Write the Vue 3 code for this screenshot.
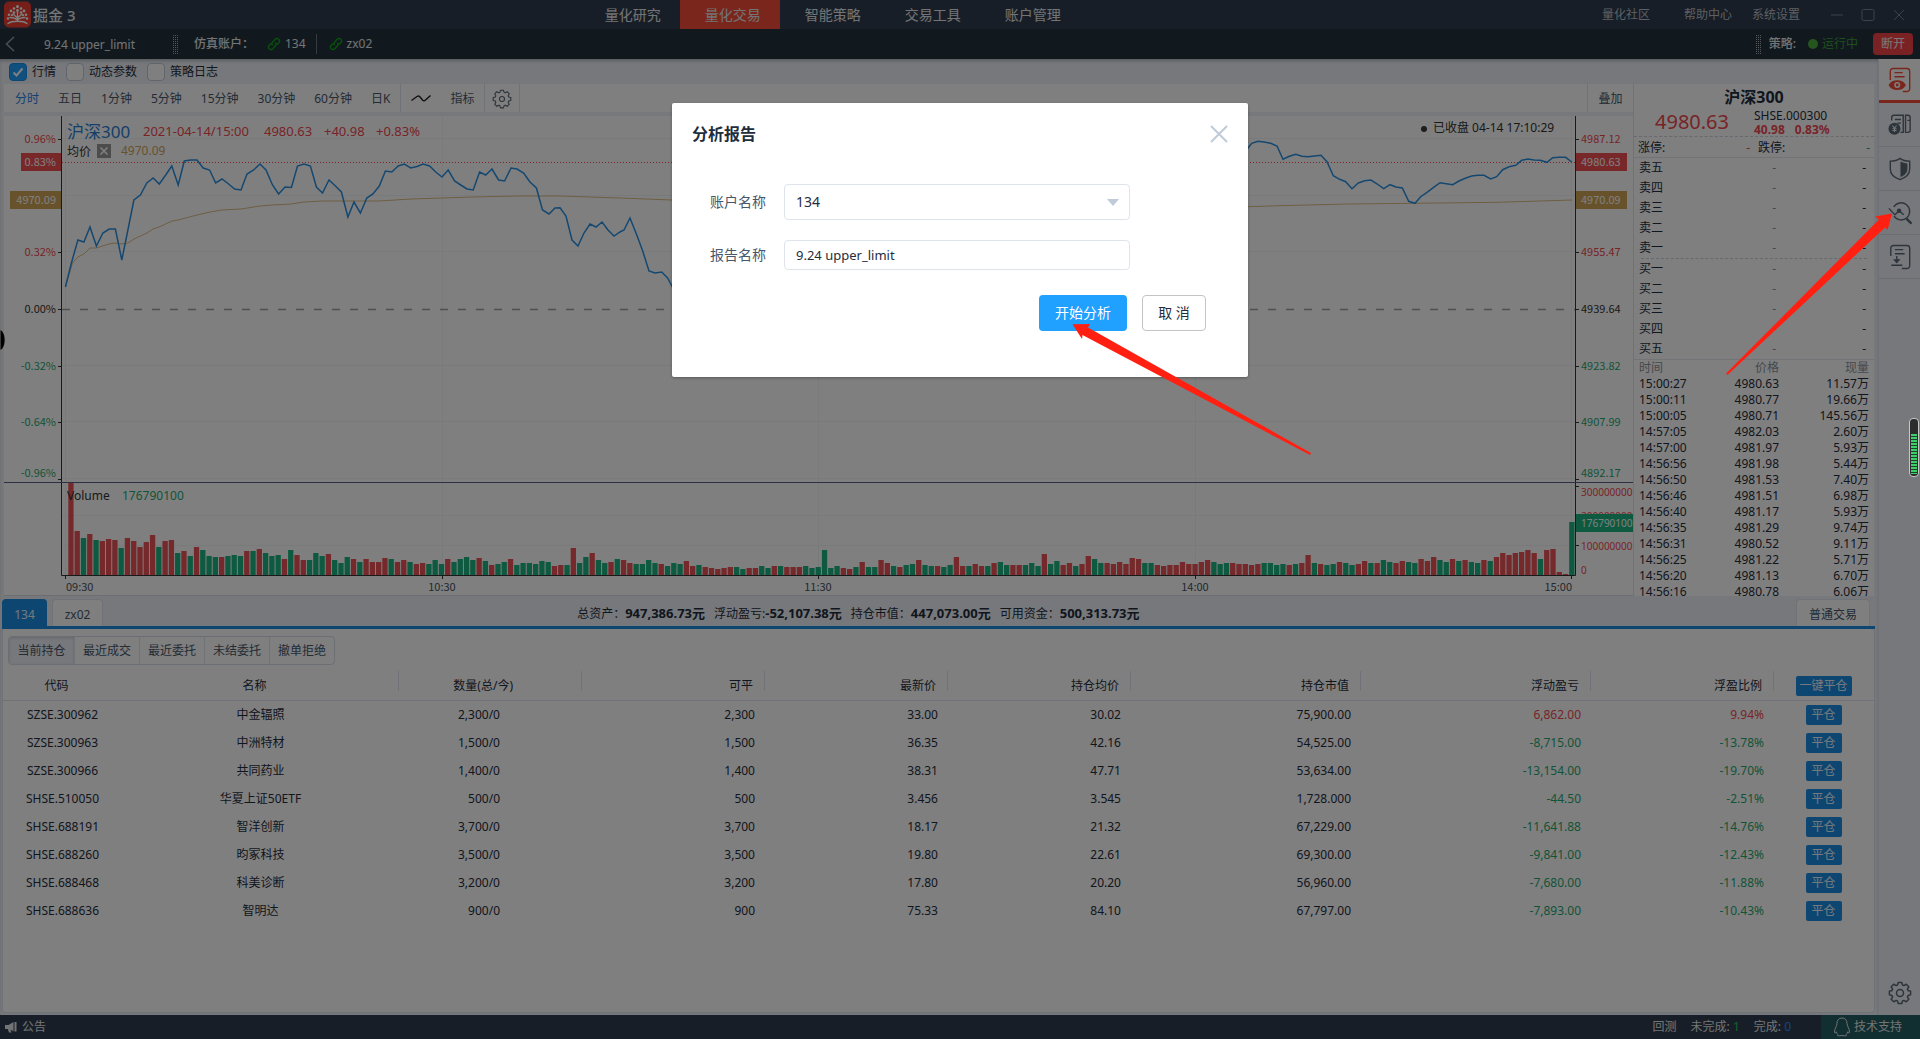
<script setup>
import { ref } from 'vue'

const tabs = ['量化研究', '量化交易', '智能策略', '交易工具', '账户管理']
const activeTab = ref('量化交易')
const panels = ref([
  { id: 'quote', label: '行情', on: true },
  { id: 'params', label: '动态参数', on: false },
  { id: 'logs', label: '策略日志', on: false },
])
const periods = ['分时', '五日', '1分钟', '5分钟', '15分钟', '30分钟', '60分钟', '日K']

const account = ref('134')
const reportName = ref('9.24 upper_limit')

const priceLine =
  '65.4,287 71.4,263 77.9,240 83.9,242 90,227 96.4,246 102.9,233 109.3,229 115.4,229 121.8,260 127.9,230 133.9,200 140.4,195 146.8,183 153.2,178 159.3,184 165.7,175 171.8,166 178.2,185 184.3,161 190.7,160 197,160 203.2,168 209.6,170 215.7,183 222,179 228.6,184 234.6,189 241,190 247,174 253.6,170 260,164 266,170 272.5,185 278.6,194 285,187 291.4,187.5 297.5,166 304,164 310.4,166 316.4,187 322.5,193 329,180 335.4,186 341.4,192 347.9,217 354,202 360.4,213 366.8,198 372.9,194 379.3,186 385.4,171 391.8,172 398.2,166 404.3,164 410.7,168 417,166.5 423.2,164 429.6,166 435.7,172 442,177 448.2,170 454.6,181 460.7,185 467,189 473.2,190 479.6,172 485.7,175 492,169 498.6,180 504.6,181 511,168 517,169 523.6,173 530,182 536.4,188 542.5,210 549,214 555,208 560,207.7 566,216 572,240 578,246 584,233 590,224 596,227 602,222 608,230 614,236 620,232 624,230 630,218 636.4,234 642.7,251 649,271 655,273 661.7,272 667.6,278 674,290 680,300 1240,160 1248,148 1251.7,143.3 1258,141.3 1264,142 1270.7,143.3 1277,146 1283,159.3 1289.3,156.3 1295.7,154.3 1302,156.3 1308,156.7 1314.3,156 1321,155.3 1327,161.7 1333.3,175.7 1339.7,179.3 1345.7,181.7 1352,188.7 1358.3,183 1364.7,180.7 1371,180 1377.3,184 1383.7,188.7 1390,184.7 1396,187 1402.3,188 1408.7,201.3 1415,203.3 1420.7,196.7 1427,192.3 1433.3,187.7 1440,182.7 1446.3,183.7 1452.7,184.7 1459,181 1465.3,178.3 1471.7,176 1478,175.3 1484,175.3 1490.7,179 1496.7,176.7 1502.7,169.7 1509,166.7 1515.7,165.3 1521.7,160.3 1528,159 1534,160 1540.3,160.3 1547,162.3 1552.7,157.7 1559.3,157.3 1565.7,157.3 1571.7,162'
const averageLine =
  '65.4,287 72.5,263 77.9,257 84,254 90,248 96,248 109,244 115,243 122,244 128,243 134,239 147,233 153,229 159,227 172,221 178,220 197,215 210,212 222,210 241,209 260,206 272,205 291,204 304,202 322,201 341,201 367,201 379,201 411,199 442,198 473,197 517,196 560,196 620,198 672,200 960,208 1248,206.7 1280,205.7 1347,204 1413,203.3 1497,202.3 1572,200'

const volumes = `
R93 R44 G37 R41 G35 R34 R36 R35 G27 R37 R34 R28 R33 R40 G28 R34 R35 G22 R24 G19 R28 G25 G19 G18 R18 G19 G20 G19 R24 G24
R26 G22 G19 G20 R16 G25 R20 R15 G15 G22 G19 R21 G15 G12 G18 R16 G13 R16 R13 R13 R17 G16 R13 R15 G13 R11 R12 G11 G15 G11
R16 G13 G16 G18 G15 R17 G14 R10 G11 G13 R16 G10 G12 G12 G11 G14 G13 R9 R10 G10 R27 G12 G18 R22 G15 G12 R13 G16 R15 R12
G11 G11 G15 G12 R11 G9 G12 G11 R14 R9 G10 R8 R7 R6 R7 R8 G8 G6 R7 R7 G9 G7 R9 G9 R8 R8 R8 G9 G7 G8 G25 G7 G9 R7 R6 G8
R13 G8 G8 R15 R12 G9 R8 G10 G11 R15 G10 G9 R9 G8 G10 R18 R9 G9 R11 R9 G9 R12 G13 G10 R10 R10 G10 G12 G9 R21 G11 G14 R10
R12 G9 R11 R19 G16 G12 R12 R11 R13 R11 R17 R16 G12 G12 R10 R9 R10 R10 R13 R11 R11 R13 R15 G13 G11 G12 R12 R11 R11 R10 R11
G12 G12 G10 G11 R10 G11 R12 R20 G12 R11 G10 G11 R13 G12 G10 R11 R14 G12 R12 G15 G13 R12 R14 G13 G12 R16 R14 R18 G15 G13
R16 G14 R15 G13 G12 R15 G14 R18 R22 R20 R22 R23 R25 R22 G16 R25 R26 R3 R1 G53`
  .trim()
  .split(/\s+/)
  .map((v, i, all) => ({ x: 1569.2 - (all.length - 1 - i) * 6.28, h: Number(v.slice(1)), up: v[0] === 'R' }))

const leftTicks = [
  { y: 139, t: '0.96%', c: 'up' },
  { y: 252, t: '0.32%', c: 'up' },
  { y: 309, t: '0.00%', c: 'flat' },
  { y: 366, t: '-0.32%', c: 'down' },
  { y: 422, t: '-0.64%', c: 'down' },
  { y: 473, t: '-0.96%', c: 'down' },
]
const rightTicks = [
  { y: 139, t: '4987.12', c: 'up' },
  { y: 252, t: '4955.47', c: 'up' },
  { y: 309, t: '4939.64', c: 'flat' },
  { y: 366, t: '4923.82', c: 'down' },
  { y: 422, t: '4907.99', c: 'down' },
  { y: 473, t: '4892.17', c: 'down' },
]
const tickMarks = [139, 162, 200, 252, 309, 366, 422, 479]
const gridRows = [139, 196, 252, 366, 422, 479, 516, 546]
const gridCols = [65, 442, 818, 1195, 1571]
const timeTicks = [
  { x: 66, t: '09:30', a: 'start' },
  { x: 442, t: '10:30', a: 'middle' },
  { x: 818, t: '11:30', a: 'middle' },
  { x: 1195, t: '14:00', a: 'middle' },
  { x: 1572, t: '15:00', a: 'end' },
]

const asks = ['卖五', '卖四', '卖三', '卖二', '卖一']
const bids = ['买一', '买二', '买三', '买四', '买五']
const tape = [
  ['15:00:27', '4980.63', '11.57万'],
  ['15:00:11', '4980.77', '19.66万'],
  ['15:00:05', '4980.71', '145.56万'],
  ['14:57:05', '4982.03', '2.60万'],
  ['14:57:00', '4981.97', '5.93万'],
  ['14:56:56', '4981.98', '5.44万'],
  ['14:56:50', '4981.53', '7.40万'],
  ['14:56:46', '4981.51', '6.98万'],
  ['14:56:40', '4981.17', '5.93万'],
  ['14:56:35', '4981.29', '9.74万'],
  ['14:56:31', '4980.52', '9.11万'],
  ['14:56:25', '4981.22', '5.71万'],
  ['14:56:20', '4981.13', '6.70万'],
  ['14:56:16', '4980.78', '6.06万'],
]

const summary = [
  ['总资产：', '947,386.73元'],
  ['浮动盈亏:', '-52,107.38元'],
  ['持仓市值：', '447,073.00元'],
  ['可用资金：', '500,313.73元'],
]
const views = ['当前持仓', '最近成交', '最近委托', '未结委托', '撤单拒绝']
const headers = ['代码', '名称', '数量(总/今)', '可平', '最新价', '持仓均价', '持仓市值', '浮动盈亏', '浮盈比例']
const widths = [119, 277, 183, 183, 183, 183, 230, 230, 183, 101]
const positions = [
  ['SZSE.300962', '中金辐照', '2,300/0', '2,300', '33.00', '30.02', '75,900.00', '6,862.00', '9.94%'],
  ['SZSE.300963', '中洲特材', '1,500/0', '1,500', '36.35', '42.16', '54,525.00', '-8,715.00', '-13.78%'],
  ['SZSE.300966', '共同药业', '1,400/0', '1,400', '38.31', '47.71', '53,634.00', '-13,154.00', '-19.70%'],
  ['SHSE.510050', '华夏上证50ETF', '500/0', '500', '3.456', '3.545', '1,728.000', '-44.50', '-2.51%'],
  ['SHSE.688191', '智洋创新', '3,700/0', '3,700', '18.17', '21.32', '67,229.00', '-11,641.88', '-14.76%'],
  ['SHSE.688260', '昀冢科技', '3,500/0', '3,500', '19.80', '22.61', '69,300.00', '-9,841.00', '-12.43%'],
  ['SHSE.688468', '科美诊断', '3,200/0', '3,200', '17.80', '20.20', '56,960.00', '-7,680.00', '-11.88%'],
  ['SHSE.688636', '智明达', '900/0', '900', '75.33', '84.10', '67,797.00', '-7,893.00', '-10.43%'],
]
const tone = (row, i) => (i < 7 ? '' : row[i].startsWith('-') ? 'down' : 'up')

// Outline of an eight-toothed gear centred on 12,12.
const gearPath = (() => {
  const pts = []
  for (let k = 0; k < 8; k++) {
    const base = (k * Math.PI) / 4
    for (const [da, r] of [[-0.3, 8.4], [-0.17, 10.8], [0.17, 10.8], [0.3, 8.4]]) {
      const a = base + da
      pts.push(`${(12 + r * Math.cos(a)).toFixed(1)} ${(12 + r * Math.sin(a)).toFixed(1)}`)
    }
  }
  return `M${pts.join('L')}Z`
})()
</script>

<template>
  <div class="app">
    <header class="titlebar">
      <div class="brand">
        <svg class="logo" viewBox="0 0 27 27" aria-hidden="true">
          <rect width="27" height="26" y="0.5" rx="5" fill="#ec3f31" />
          <g stroke="#fff" stroke-width="1.3" fill="none" stroke-linecap="round">
            <path d="M13.5 20V11M13.5 17L9 13M13.5 17L18 13M13.3 19C11 16.5 8 16.5 6 16.5M13.7 19C16 16.5 19 16.5 21 16.5M4 22.5C8 19.5 19 19.5 23 22.5" />
          </g>
          <g fill="#fff">
            <circle cx="13.5" cy="5.5" r="1.5" /><circle cx="13.5" cy="9.5" r="1.4" />
            <circle cx="10" cy="7.5" r="1.3" /><circle cx="17" cy="7.5" r="1.3" />
            <circle cx="7" cy="10" r="1.4" /><circle cx="20" cy="10" r="1.4" />
            <circle cx="10" cy="11.5" r="1.3" /><circle cx="17" cy="11.5" r="1.3" />
            <circle cx="5" cy="13.7" r="1.3" /><circle cx="22" cy="13.7" r="1.3" />
            <circle cx="8" cy="14.2" r="1.1" /><circle cx="19" cy="14.2" r="1.1" />
            <circle cx="4" cy="17.5" r="1.2" /><circle cx="23" cy="17.5" r="1.2" />
          </g>
        </svg>
        <span>掘金 3</span>
      </div>
      <nav class="tabs">
        <a v-for="t in tabs" :key="t" href="#" :class="{ active: t === activeTab }" @click.prevent="activeTab = t">{{ t }}</a>
      </nav>
      <div class="tools">
        <a href="#" class="community">量化社区</a>
        <a href="#">帮助中心</a>
        <a href="#">系统设置</a>
        <button type="button" aria-label="最小化"><svg viewBox="0 0 14 14"><path d="M1 7H13" /></svg></button>
        <button type="button" aria-label="最大化"><svg viewBox="0 0 14 14"><rect x="1" y="1.5" width="12" height="11" rx="1.5" /></svg></button>
        <button type="button" aria-label="关闭"><svg viewBox="0 0 14 14"><path d="M2 2L12 12M12 2L2 12" /></svg></button>
      </div>
    </header>

    <div class="strategybar">
      <button type="button" class="back" aria-label="返回">
        <svg viewBox="0 0 10 16"><path d="M9 1L1.5 8L9 15" /></svg>
      </button>
      <span class="strategy">9.24 upper_limit</span>
      <svg class="grip" viewBox="0 0 5 19" aria-hidden="true"><path d="M0.5 0V19M2.5 0V19M4.5 0V19" /></svg>
      <span class="kind">仿真账户：</span>
      <a v-for="(a, i) in ['134', 'zx02']" :key="a" href="#" class="account" :class="{ split: i }">
        <svg viewBox="0 0 14 14" aria-hidden="true">
          <path d="M5.6 8.4A2.6 2.6 0 0 1 5.7 4.9L8.2 2.3A2.5 2.5 0 0 1 11.8 5.8L10 7.6M8.4 5.6A2.6 2.6 0 0 1 8.3 9.1L5.8 11.7A2.5 2.5 0 0 1 2.2 8.2L4 6.4" />
        </svg>{{ a }}
      </a>
      <div class="state">
        <svg class="grip" viewBox="0 0 5 19" aria-hidden="true"><path d="M0.5 0V19M2.5 0V19M4.5 0V19" /></svg>
        <span class="label">策略:</span>
        <i class="dot"></i>
        <span class="running">运行中</span>
        <button type="button" class="disconnect">断开</button>
      </div>
    </div>

    <div class="body">
      <main class="main">
        <div class="checks">
          <label v-for="p in panels" :key="p.id" :for="p.id">
            <input :id="p.id" v-model="p.on" type="checkbox" />{{ p.label }}
          </label>
        </div>

        <div class="market">
          <section class="chartcol">
            <div class="toolbar">
              <button v-for="(p, i) in periods" :key="p" type="button" :class="{ on: i === 0 }">{{ p }}</button>
              <span class="group">
                <button type="button" aria-label="画线"><svg class="wave" viewBox="0 0 20 10"><path d="M0.5 6.5L6 2.5C7.5 1.5 8.5 2 9.5 3.5L11.500 6C12.500 7 13.500 7 14.500 6L19.5 1.500" /></svg></button>
                <button type="button">指标</button>
              </span>
              <span class="group gearbox">
                <button type="button" aria-label="设置">
                  <svg class="gear" viewBox="0 0 24 24"><path :d="gearPath" /><circle cx="12" cy="12" r="3" /></svg>
                </button>
              </span>
              <button type="button" class="overlay-btn">叠加</button>
            </div>

            <svg class="chart" viewBox="4 116 1629 479" role="img" aria-label="沪深300 分时图">
              <rect x="4" y="116" width="1629" height="479" fill="#fff" />
              <g class="grid">
                <path v-for="y in gridRows" :key="'r' + y" :d="`M62 ${y - 0.5}H1575`" />
                <path v-for="x in gridCols" :key="'c' + x" :d="`M${x + 0.5} 116V575`" />
              </g>
              <path d="M62 309.5H1575" class="zero" />
              <path d="M62 162.5H1575" class="last" />
              <polyline :points="averageLine" class="avg" />
              <polyline :points="priceLine" class="price" />
              <rect
                v-for="(v, i) in volumes" :key="i" :x="v.x" :y="575 - v.h" width="5.3" :height="v.h"
                :class="v.up ? 'fill-up' : 'fill-down'"
              />
              <path d="M61.5 116V575.5H1575.5V116" class="frame" />
              <path d="M4 482.5H1633" class="split" />
              <g class="frame">
                <path v-for="y in tickMarks" :key="y" :d="`M58 ${y + 0.5}H61M1576 ${y + 0.5}H1579`" />
                <path d="M65.5 576V579M442.5 576V579M818.5 576V579M1195.5 576V579M1571.5 576V579M1576 486.5H1579M1576 545.5H1579" />
              </g>
              <rect x="21" y="153" width="40" height="18" class="fill-last" />
              <rect x="10" y="191" width="51" height="18" class="fill-avg" />
              <rect x="1576" y="153" width="51" height="18" class="fill-last" />
              <rect x="1576" y="191" width="51" height="18" class="fill-avg" />
              <g class="axis" text-anchor="end">
                <text v-for="k in leftTicks" :key="k.t" x="56" :y="k.y + 4" :class="k.c">{{ k.t }}</text>
                <text x="56" y="166" class="badge">0.83%</text>
                <text x="56" y="204" class="badge">4970.09</text>
              </g>
              <g class="axis">
                <text v-for="k in rightTicks" :key="k.t" x="1581" :y="k.y + 4" :class="k.c">{{ k.t }}</text>
                <text x="1581" y="166" class="badge">4980.63</text>
                <text x="1581" y="204" class="badge">4970.09</text>
              </g>
              <g class="volaxis">
                <text x="1581" y="496" class="up">300000000</text>
                <text x="1581" y="520" class="up">200000000</text>
                <text x="1581" y="550" class="up">100000000</text>
                <text x="1581" y="574" class="up">0</text>
                <rect x="1576" y="514" width="57" height="18" class="fill-down" />
                <text x="1581" y="527" class="badge">176790100</text>
              </g>
              <g class="axis">
                <text v-for="k in timeTicks" :key="k.t" :x="k.x" y="591" :text-anchor="k.a" class="time">{{ k.t }}</text>
              </g>
              <text x="67" y="138" class="symbol">沪深300</text>
              <g class="legend up">
                <text x="143" y="136">2021-04-14/15:00</text>
                <text x="264" y="136">4980.63</text>
                <text x="324" y="136">+40.98</text>
                <text x="376" y="136">+0.83%</text>
              </g>
              <text x="67" y="156" class="small">均价</text>
              <rect x="97" y="144" width="14" height="14" fill="#999" />
              <path d="M100.5 147.5L107.5 154.5M107.5 147.5L100.5 154.5" stroke="#fff" stroke-width="1.6" />
              <text x="121" y="155" class="small gold">4970.09</text>
              <text x="67" y="500" class="small">Volume</text>
              <text x="122" y="500" class="small down">176790100</text>
              <circle cx="1424" cy="129" r="3" fill="#3a3a3a" />
              <text x="1433" y="132" class="small">已收盘 04-14 17:10:29</text>
            </svg>
          </section>

          <aside class="quote">
            <h2>沪深300</h2>
            <div class="headline">
              <strong class="big up">4980.63</strong>
              <div class="detail">
                <span>SHSE.000300</span>
                <b class="up"><span>40.98</span><span>0.83%</span></b>
              </div>
            </div>
            <div class="limits">
              <span>涨停:</span><span class="up dash">-</span>
              <span>跌停:</span><span class="down dash">-</span>
            </div>
            <ul class="book asks">
              <li v-for="a in asks" :key="a"><span>{{ a }}</span><span class="mid">-</span><span>-</span></li>
            </ul>
            <ul class="book">
              <li v-for="b in bids" :key="b"><span>{{ b }}</span><span class="mid">-</span><span>-</span></li>
            </ul>
            <div class="tapebox">
              <table class="tape">
                <thead><tr><th>时间</th><th>价格</th><th>现量</th></tr></thead>
                <tbody>
                  <tr v-for="r in tape" :key="r[0]"><td v-for="c in r" :key="c">{{ c }}</td></tr>
                </tbody>
              </table>
            </div>
          </aside>
        </div>

        <section class="trade">
          <div class="accounts">
            <button type="button" class="acct on">134</button>
            <button type="button" class="acct">zx02</button>
            <p class="summary">
              <span v-for="s in summary" :key="s[0]">{{ s[0] }}<b>{{ s[1] }}</b></span>
            </p>
            <button type="button" class="acct normal">普通交易</button>
          </div>
          <div class="sheet">
            <div class="views">
              <button v-for="(v, i) in views" :key="v" type="button" :class="{ on: i === 0 }">{{ v }}</button>
            </div>
            <table class="positions">
              <colgroup><col v-for="(w, i) in widths" :key="i" :style="{ width: w + 'px' }" /></colgroup>
              <thead>
                <tr>
                  <th v-for="h in headers" :key="h">{{ h }}</th>
                  <th><button type="button" class="close-btn">一键平仓</button></th>
                </tr>
              </thead>
              <tbody>
                <tr v-for="row in positions" :key="row[0]">
                  <td v-for="(c, i) in row" :key="i" :class="tone(row, i)">{{ c }}</td>
                  <td><button type="button" class="close-btn one">平仓</button></td>
                </tr>
              </tbody>
            </table>
          </div>
        </section>
      </main>

      <nav class="rail">
        <button type="button" class="active" aria-label="行情">
          <svg viewBox="0 0 26 28">
            <path d="M2.5 14V4.5A3 3 0 0 1 5.5 1.5H20.5A3 3 0 0 1 23.5 4.5V23.5A3 3 0 0 1 20.5 26.5H16M7 6H16M7 10.5H18" />
            <path d="M1.5 19.5C5 13.5 15 13.5 18.5 19.5C15 25.5 5 25.5 1.5 19.5Z" fill="currentColor" />
            <circle cx="10" cy="19.5" r="3.3" fill="#fff" stroke="none" /><circle cx="10" cy="19.5" r="1.6" fill="currentColor" stroke="none" />
          </svg>
        </button>
        <button type="button" aria-label="资金">
          <svg viewBox="0 0 26 28">
            <path d="M4 9V6A2.5 2.5 0 0 1 6.5 3.5H16.5V22H13.5M7.5 8H14M10 12H14M19 3.5H21.5A2.5 2.5 0 0 1 24 6V19.5A2.5 2.5 0 0 1 21.5 22H19ZM21 9H24" />
            <circle cx="7" cy="18" r="6.5" fill="currentColor" stroke="none" />
            <path class="yen" d="M4.8 14.5L7 17.5L9.2 14.5M7 17.5V21.5M4.8 18H9.2M4.8 20H9.2" />
          </svg>
        </button>
        <button type="button" aria-label="风控">
          <svg viewBox="0 0 26 28">
            <path d="M13 2.5C10 4.8 6 5.5 2.5 5.5V14C2.5 19.5 7 23.5 13 25.5C19 23.5 23.5 19.5 23.5 14V5.5C20 5.5 16 4.8 13 2.5Z" />
            <path d="M13.5 6C16 7.3 18.5 8 21 8V14C21 18.3 17.5 21.3 13.5 22.8Z" fill="currentColor" stroke="none" />
          </svg>
        </button>
        <button type="button" aria-label="分析">
          <svg viewBox="0 0 26 28">
            <path d="M6.2 7.5A9.3 9.3 0 1 1 6.5 17.5M1 9L7.5 16L12 11.5L17 16" />
            <circle cx="12" cy="11.5" r="2.4" fill="currentColor" stroke="none" />
            <path class="handle" d="M20 20L25.5 25.5" />
          </svg>
        </button>
        <button type="button" aria-label="导出">
          <svg viewBox="0 0 26 28">
            <path d="M3 13V4.5A3 3 0 0 1 6 1.5H20.5A3 3 0 0 1 23.5 4.5V23.5A3 3 0 0 1 20.5 26.5H15M7.5 6H16.5M7.5 10.5H18" />
            <path d="M9.5 13V18M3.5 23H15.5" /><path d="M5.5 16.5H13.5L9.5 21Z" fill="currentColor" stroke="none" />
          </svg>
        </button>
        <button type="button" class="settings" aria-label="设置">
          <svg class="gear" viewBox="0 0 24 24"><path :d="gearPath" /><circle cx="12" cy="12" r="3.5" /></svg>
        </button>
      </nav>
    </div>

    <footer class="status">
      <a href="#" class="notice">
        <svg viewBox="0 0 14 14" aria-hidden="true"><path d="M1 5H4.5L9.5 2V11.5L6.5 9.5L7.5 12.5H5L3.8 9H1Z" /><path d="M10.5 2H12.5V11.5H10.5Z" /></svg>公告
      </a>
      <span class="task">回测</span>
      <span class="task">未完成: <i class="green">1</i></span>
      <span class="task">完成: <i class="blue">0</i></span>
      <a href="#" class="support">
        <svg viewBox="0 0 18 20" aria-hidden="true"><path d="M9 1C5.5 1 4 3.5 4 6.5C4 9 1.5 11.5 1.5 15C1.5 16.5 2.5 16 3.3 14.8C3.6 16 4.2 17 5 17.7C3.5 18.5 5 19.3 9 18.5C13 19.3 14.5 18.5 13 17.7C13.8 17 14.4 16 14.7 14.8C15.5 16 16.5 16.5 16.5 15C16.5 11.5 14 9 14 6.5C14 3.5 12.5 1 9 1Z" /></svg>技术支持
      </a>
    </footer>

    <div class="mask">
      <form class="dialog" role="dialog" aria-labelledby="dlg-title" @submit.prevent>
        <div class="dialog-head">
          <h1 id="dlg-title">分析报告</h1>
          <button type="button" class="x" aria-label="关闭"><svg viewBox="0 0 18 18"><path d="M1 1L17 17M17 1L1 17" /></svg></button>
        </div>
        <div class="field">
          <label for="account">账户名称</label>
          <div class="selectbox">
            <select id="account" v-model="account"><option>134</option><option>zx02</option></select>
            <svg viewBox="0 0 12 7" aria-hidden="true"><path d="M0 0H12L6 7Z" /></svg>
          </div>
        </div>
        <div class="field">
          <label for="report">报告名称</label>
          <input id="report" v-model="reportName" type="text" />
        </div>
        <div class="actions">
          <button type="submit" class="primary">开始分析</button>
          <button type="button" class="plain">取 消</button>
        </div>
      </form>
    </div>

    <svg class="pointer first" viewBox="0 0 240 132" aria-hidden="true"><path d="M0.5 0.3L18 0L16 3.5L239 129L238 131L10.5 11L10 15Z" /></svg>
    <svg class="pointer second" viewBox="0 0 167 163" aria-hidden="true"><path d="M166 0.5L149 3.5L153 6.5L0 160.5L1.5 162L159 14.5L161.5 17Z" /></svg>
    <svg class="edge" viewBox="0 0 5 20" aria-hidden="true"><path d="M0.5 0C6 3 6 17 0.5 20Z" /></svg>
    <div class="meter"><i></i></div>
  </div>
</template>

<style>
body {
  margin: 0;
  background: #eef1f6;
}
</style>

<style scoped>
.app {
  position: relative;
  display: flex;
  flex-direction: column;
  min-height: 100vh;
  font: 12px/16px "Noto Sans", "Noto Sans CJK SC", sans-serif;
  color: #1f2d3d;
  background: #eef1f6;
}
button, input, select {
  font: inherit;
  color: inherit;
  padding: 0;
  border: 0;
  background: none;
}
a {
  color: inherit;
  text-decoration: none;
}
i {
  font-style: normal;
}
svg {
  display: block;
  fill: none;
}
.up { color: #f0484f; fill: #f0484f; }
.down { color: #1fa971; fill: #1fa971; }

.titlebar {
  display: grid;
  grid-template-columns: 30.2% auto 1fr;
  height: 29px;
  background: #2f3d4e;
  color: #e6e8ea;
}
.brand {
  display: flex;
  align-items: center;
  gap: 2px;
  padding-left: 4px;
  font-size: 15px;
  font-weight: 500;
}
.logo {
  width: 27px;
  height: 27px;
}
.tabs {
  display: flex;
  font-size: 14px;
}
.tabs a {
  width: 94px;
  padding-left: 6px;
  line-height: 29px;
  text-align: center;
}
.tabs a.active {
  background: #f44c38;
}
.tools {
  display: flex;
  align-items: center;
  justify-content: flex-end;
  gap: 20px;
  padding-right: 14px;
  color: #b9bfc7;
}
.tools .community {
  margin-right: 14px;
}
.tools button {
  width: 14px;
  height: 14px;
  margin-left: -3px;
}
.tools button:first-of-type {
  margin-left: 10px;
}
.tools path, .tools rect {
  stroke: #7b8591;
}

.strategybar {
  display: flex;
  align-items: center;
  height: 30px;
  background: #22323e;
  color: #e6e8ea;
}
.back {
  width: 10px;
  height: 16px;
  margin-left: 5px;
}
.back path {
  stroke: #98a0a8;
  stroke-width: 1.5;
}
.strategy {
  margin-left: 29px;
  width: 129px;
  padding-top: 2px;
}
.grip {
  width: 5px;
  height: 19px;
  flex: none;
}
.grip path {
  stroke: #aab0b6;
  stroke-dasharray: 1 1;
}
.kind {
  margin-left: 16px;
  width: 73px;
  font-weight: 500;
  white-space: nowrap;
}
.account {
  display: flex;
  align-items: center;
  gap: 4px;
}
.account svg {
  width: 14px;
  height: 14px;
}
.account path {
  stroke: #0ea312;
  stroke-width: 1.4;
}
.account.split {
  margin-left: 10px;
  padding-left: 12px;
  line-height: 20px;
  border-left: 1px solid #6c7680;
}
.state {
  display: flex;
  align-items: center;
  margin-left: auto;
  padding-right: 7px;
}
.state .label {
  margin: 0 12px 0 8px;
  font-weight: 500;
}
.dot {
  width: 10px;
  height: 10px;
  border-radius: 50%;
  background: #49ac3c;
}
.running {
  margin: 0 15px 0 4px;
  color: #3f9e38;
}
.disconnect {
  width: 40px;
  height: 22px;
  border-radius: 4px;
  background: #f44346;
  color: #f2f2f2;
}

.body {
  display: flex;
  flex: 1;
}
.main {
  display: flex;
  flex: 1;
  flex-direction: column;
  min-width: 0;
  box-shadow: inset 0 3px 4px -2px #9aa0a8;
}
.checks {
  display: flex;
  align-items: center;
  gap: 10px;
  height: 25px;
  padding-left: 9px;
}
.checks label {
  display: flex;
  align-items: center;
  gap: 5px;
}
.checks input {
  appearance: none;
  width: 18px;
  height: 18px;
  margin: 0;
  border: 1px solid #bfcbd9;
  border-radius: 4px;
  box-sizing: border-box;
  background: #fff;
}
.checks input:checked {
  border-color: #1c8ce4;
  background: #20a0ff url("data:image/svg+xml,%3Csvg xmlns='http://www.w3.org/2000/svg' viewBox='0 0 16 16'%3E%3Cpath d='M3.5 8.5L6.5 11.5L12.5 4.5' fill='none' stroke='white' stroke-width='2'/%3E%3C/svg%3E") center / 16px;
}

.market {
  display: flex;
  padding: 0 4px;
}
.chartcol {
  flex: 1;
  min-width: 0;
  border-bottom: 1px solid #d6dce5;
}
.toolbar {
  display: flex;
  align-items: stretch;
  gap: 19px;
  height: 28px;
  margin-bottom: 4px;
  padding-left: 11px;
  background: #fff;
  color: #48576a;
}
.toolbar button {
  padding-top: 2px;
}
.toolbar .on {
  color: #2a7fe0;
}
.group {
  display: flex;
  align-items: center;
  gap: 19px;
  margin-left: -9px;
  padding: 0 0 0 10px;
  border-left: 1px solid #dfe4ec;
}
.toolbar .gearbox {
  padding-right: 7px;
  padding-left: 7px;
  border-right: 1px solid #dfe4ec;
}
.wave {
  width: 20px;
  height: 10px;
}
.wave path {
  stroke: #222;
  stroke-width: 1.4;
}
.gear {
  width: 20px;
  height: 20px;
}
.gear path, .gear circle {
  stroke: #566373;
  stroke-width: 1.3;
  stroke-linejoin: round;
}
.overlay-btn {
  margin-left: auto;
  width: 46px;
  border-left: 1px solid #dfe4ec;
}
.chart {
  width: 100%;
}
.grid path {
  stroke: #f2f4f6;
}
.zero {
  stroke: #9aa0a9;
  stroke-width: 1.5;
  stroke-dasharray: 8 10;
}
.last {
  stroke: #f0484f;
  stroke-dasharray: 1 2;
}
.avg {
  stroke: #dcbd84;
}
.price {
  stroke: #2a90e0;
  stroke-width: 1.5;
}
.frame {
  stroke: #333;
}
.split {
  stroke: #5b5f86;
}
.fill-up { fill: #ec5257; }
.fill-down { fill: #1cb583; }
.fill-last { fill: #f25055; }
.fill-avg { fill: #cfa559; }
.axis {
  font: 11px "Noto Sans CJK SC", sans-serif;
}
.volaxis {
  font-size: 10px;
}
.axis .flat, .small {
  fill: #333;
}
.badge {
  fill: #fff;
}
.axis .time {
  fill: #48525e;
}
.legend {
  font-size: 13px;
}
.symbol {
  font-size: 17px;
  fill: #2a7fd4;
}
.small {
  font-size: 12px;
}
.small.gold {
  fill: #cfa559;
}
.small.down {
  fill: #1fa971;
}

.quote {
  display: flex;
  flex: 0 0 240px;
  flex-direction: column;
  border-left: 1px solid #dfe4ec;
  background: #fff;
}
.quote h2 {
  margin: 2px 0 0;
  font-size: 16px;
  line-height: 23px;
  text-align: center;
}
.headline {
  display: flex;
  gap: 25px;
  height: 27px;
  padding-left: 21px;
  border-bottom: 1px dashed #ccd2da;
}
.big {
  font-size: 20px;
  font-weight: 400;
  line-height: 26px;
}
.detail {
  display: flex;
  flex-direction: column;
  line-height: 14px;
}
.detail b {
  display: flex;
  gap: 10px;
}
.limits {
  display: flex;
  height: 20px;
  padding: 0 4px;
  border-bottom: 1px solid #e2e7ee;
  line-height: 22px;
}
.limits span:nth-child(-n + 2) {
  flex: 0 0 30px;
}
.limits span:nth-child(2) {
  flex: 0 0 82px;
  margin-right: 8px;
}
.limits .dash {
  flex-grow: 1;
  text-align: right;
}
.book {
  display: block;
  margin: 0 7px;
  padding: 0;
  list-style: none;
}
.book.asks {
  border-bottom: 1px dashed #ccd2da;
}
.book li {
  display: grid;
  grid-template-columns: 28px 1fr 90px;
  padding-right: 1px;
  margin-left: -2px;
  line-height: 20px;
  text-align: right;
}
.book li span:first-child {
  text-align: left;
}
.book .mid {
  color: #8a919b;
}
.tapebox {
  flex: 1 1 0;
  height: 0;
  overflow: hidden;
  border-top: 1px solid #e2e7ee;
}
.tape {
  width: 100%;
  padding: 0 5px;
  border-spacing: 0;
  table-layout: fixed;
}
.tape th, .tape td {
  padding: 0;
  font-weight: 400;
  text-align: right;
}
.tape th:first-child, .tape td:first-child {
  text-align: left;
  width: 60px;
}
.tape th:last-child, .tape td:last-child {
  width: 90px;
}
.tape th {
  color: #8a919b;
}

.trade {
  display: flex;
  flex: 1;
  flex-direction: column;
  padding: 2px 3px 2px 2px;
}
.accounts {
  display: flex;
  align-items: flex-end;
  border-bottom: 3px solid #1c8ce4;
}
.acct {
  height: 27px;
  width: 51px;
  margin-right: 5px;
  padding-top: 3px;
  border: 1px solid #dfe4ec;
  border-bottom: 0;
  border-radius: 4px 4px 0 0;
  background: #fff;
  color: #48576a;
}
.acct.on {
  width: 45px;
  border-color: #1c8ce4;
  background: #1c8ce4;
  color: #e8f3fc;
}
.acct.normal {
  width: 74px;
}
.summary {
  display: flex;
  flex: 1;
  justify-content: center;
  gap: 9px;
  margin: 0;
  padding: 3px 10% 0 0;
  line-height: 24px;
}
.summary b {
  font-size: 13px;
}
.sheet {
  flex: 1;
  padding-top: 7px;
  border: 1px solid #dfe4ec;
  border-top: 0;
  border-radius: 0 4px 4px 4px;
  background: #fff;
}
.views {
  display: inline-flex;
  margin-left: 5px;
  border: 1px solid #d6dce5;
  border-radius: 4px;
  overflow: hidden;
}
.views button {
  width: 65px;
  height: 27px;
  border-left: 1px solid #dfe4ec;
  box-sizing: border-box;
  color: #48576a;
}
.views button:first-child {
  border-left: 0;
}
.views .on {
  background: #eef1f6;
  box-shadow: inset 0 1px 3px #c6ccd6;
}
.positions {
  display: table;
  width: 100%;
  margin-top: 1px;
  border-spacing: 0;
  table-layout: fixed;
}
.positions th {
  height: 28px;
  padding: 6px 12px 0 0;
  border-bottom: 1px solid #e2e5f0;
  font-weight: 400;
  text-align: right;
  background: linear-gradient(#e2e5f0, #e2e5f0) right 5px / 1px 20px no-repeat;
}
.positions td {
  height: 28px;
  padding: 0 10px 0 0;
  text-align: right;
}
.positions td:nth-child(-n + 2) {
  padding: 0;
  text-align: center;
}
.positions th:nth-child(-n + 2) {
  padding-right: 12px;
  text-align: center;
}
.positions th:first-child, .positions th:last-child {
  background: none;
}
.positions th:nth-child(3) { padding-right: 69px; }
.positions td:nth-child(3) { padding-right: 82px; }
.positions th:last-child, .positions td:last-child {
  padding-right: 2px;
  text-align: center;
}
.close-btn {
  height: 20px;
  width: 56px;
  border-radius: 2px;
  background: #1c8ce4;
  color: #e8f3fc;
  line-height: 20px;
}
.close-btn.one {
  width: 36px;
}

.rail {
  display: flex;
  flex: 0 0 41px;
  flex-direction: column;
  border-left: 1px solid #dfe4ec;
  color: #5b6978;
}
.rail button {
  display: grid;
  place-items: center;
  height: 44px;
  border-bottom: 1px solid #d2d8e1;
}
.rail .active {
  border-bottom: 3px solid #f44c38;
  background: #fff;
  color: #f44c38;
}
.rail svg {
  width: 24px;
  height: 26px;
}
.rail svg path, .rail svg circle {
  stroke: currentColor;
  stroke-width: 1.5;
}
.rail svg [stroke="none"] {
  stroke: none;
}
.rail svg .yen {
  stroke: #eef1f6;
  stroke-width: 1.1;
}
.rail svg .handle {
  stroke-width: 2.6;
}
.rail .settings {
  margin-top: auto;
  border: 0;
}

.status {
  display: flex;
  align-items: center;
  height: 24px;
  background: #2f3d4e;
  color: #e6e8ea;
  line-height: 18px;
}
.notice {
  display: flex;
  align-items: center;
  gap: 4px;
  margin: 0 auto 0 4px;
}
.notice svg {
  width: 14px;
  height: 14px;
  fill: #e6e8ea;
}
.task {
  margin-right: 14px;
}
.green { color: #22c458; }
.blue { color: #2f86ff; }
.task:last-of-type {
  margin-right: 30px;
}
.support {
  display: flex;
  align-items: center;
  gap: 3px;
  width: 87px;
  height: 24px;
  padding-left: 12px;
  background: #225c62;
}
.support svg {
  width: 18px;
  height: 20px;
}
.support path {
  stroke: #e6e8ea;
}

.mask {
  position: absolute;
  inset: 0;
  background: rgba(0, 0, 0, 0.5);
}
.dialog {
  width: 536px;
  margin: 103px auto 0;
  padding: 22px 20px 46px 20px;
  border-radius: 2px;
  background: #fff;
  box-shadow: 0 1px 3px rgba(0, 0, 0, 0.3);
  font-size: 14px;
  line-height: 20px;
}
.dialog-head {
  display: flex;
  align-items: center;
  justify-content: space-between;
  height: 18px;
  margin-bottom: 41px;
}
.dialog h1 {
  margin: 0;
  font-size: 16px;
}
.x {
  width: 18px;
  height: 18px;
}
.x path {
  stroke: #bfcbd9;
  stroke-width: 2;
}
.field {
  display: flex;
  align-items: center;
  margin-bottom: 20px;
  padding-left: 18px;
}
.field label {
  width: 74px;
  color: #48576a;
}
.field input, .field select {
  width: 346px;
  height: 30px;
  padding: 0 11px;
  border: 1px solid #dfe4ec;
  border-radius: 4px;
  box-sizing: border-box;
  background: #fff;
}
.field input {
  font-size: 13px;
}
.field select {
  height: 36px;
  appearance: none;
}
.selectbox {
  position: relative;
}
.selectbox svg {
  position: absolute;
  top: 15px;
  right: 11px;
  width: 12px;
  height: 7px;
  fill: #bfcbd9;
}
.actions {
  display: flex;
  justify-content: flex-end;
  gap: 15px;
  margin-top: 25px;
  padding-right: 22px;
}
.actions button {
  height: 36px;
  border-radius: 4px;
}
.primary {
  width: 88px;
  background: #20a0ff;
  color: #fff;
}
.actions .plain {
  width: 64px;
  border: 1px solid #c4c4c4;
}

.pointer {
  position: absolute;
  fill: #ff2012;
  pointer-events: none;
}
.first {
  top: 324px;
  left: 1072px;
  width: 240px;
}
.second {
  top: 213px;
  right: 27px;
  width: 167px;
}
.edge {
  position: absolute;
  top: 330px;
  left: 0;
  width: 5px;
  fill: #000;
}
.meter {
  position: absolute;
  top: 418px;
  right: 1px;
  width: 6px;
  height: 40px;
  padding: 15px 1px 2px;
  border: 1px solid #c8c8c8;
  border-radius: 4px;
  background: #2c2c2c;
}
.meter i {
  display: block;
  height: 100%;
  background: repeating-linear-gradient(#3ccf6c 0 2px, #20402c 2px 3px);
}
</style>
